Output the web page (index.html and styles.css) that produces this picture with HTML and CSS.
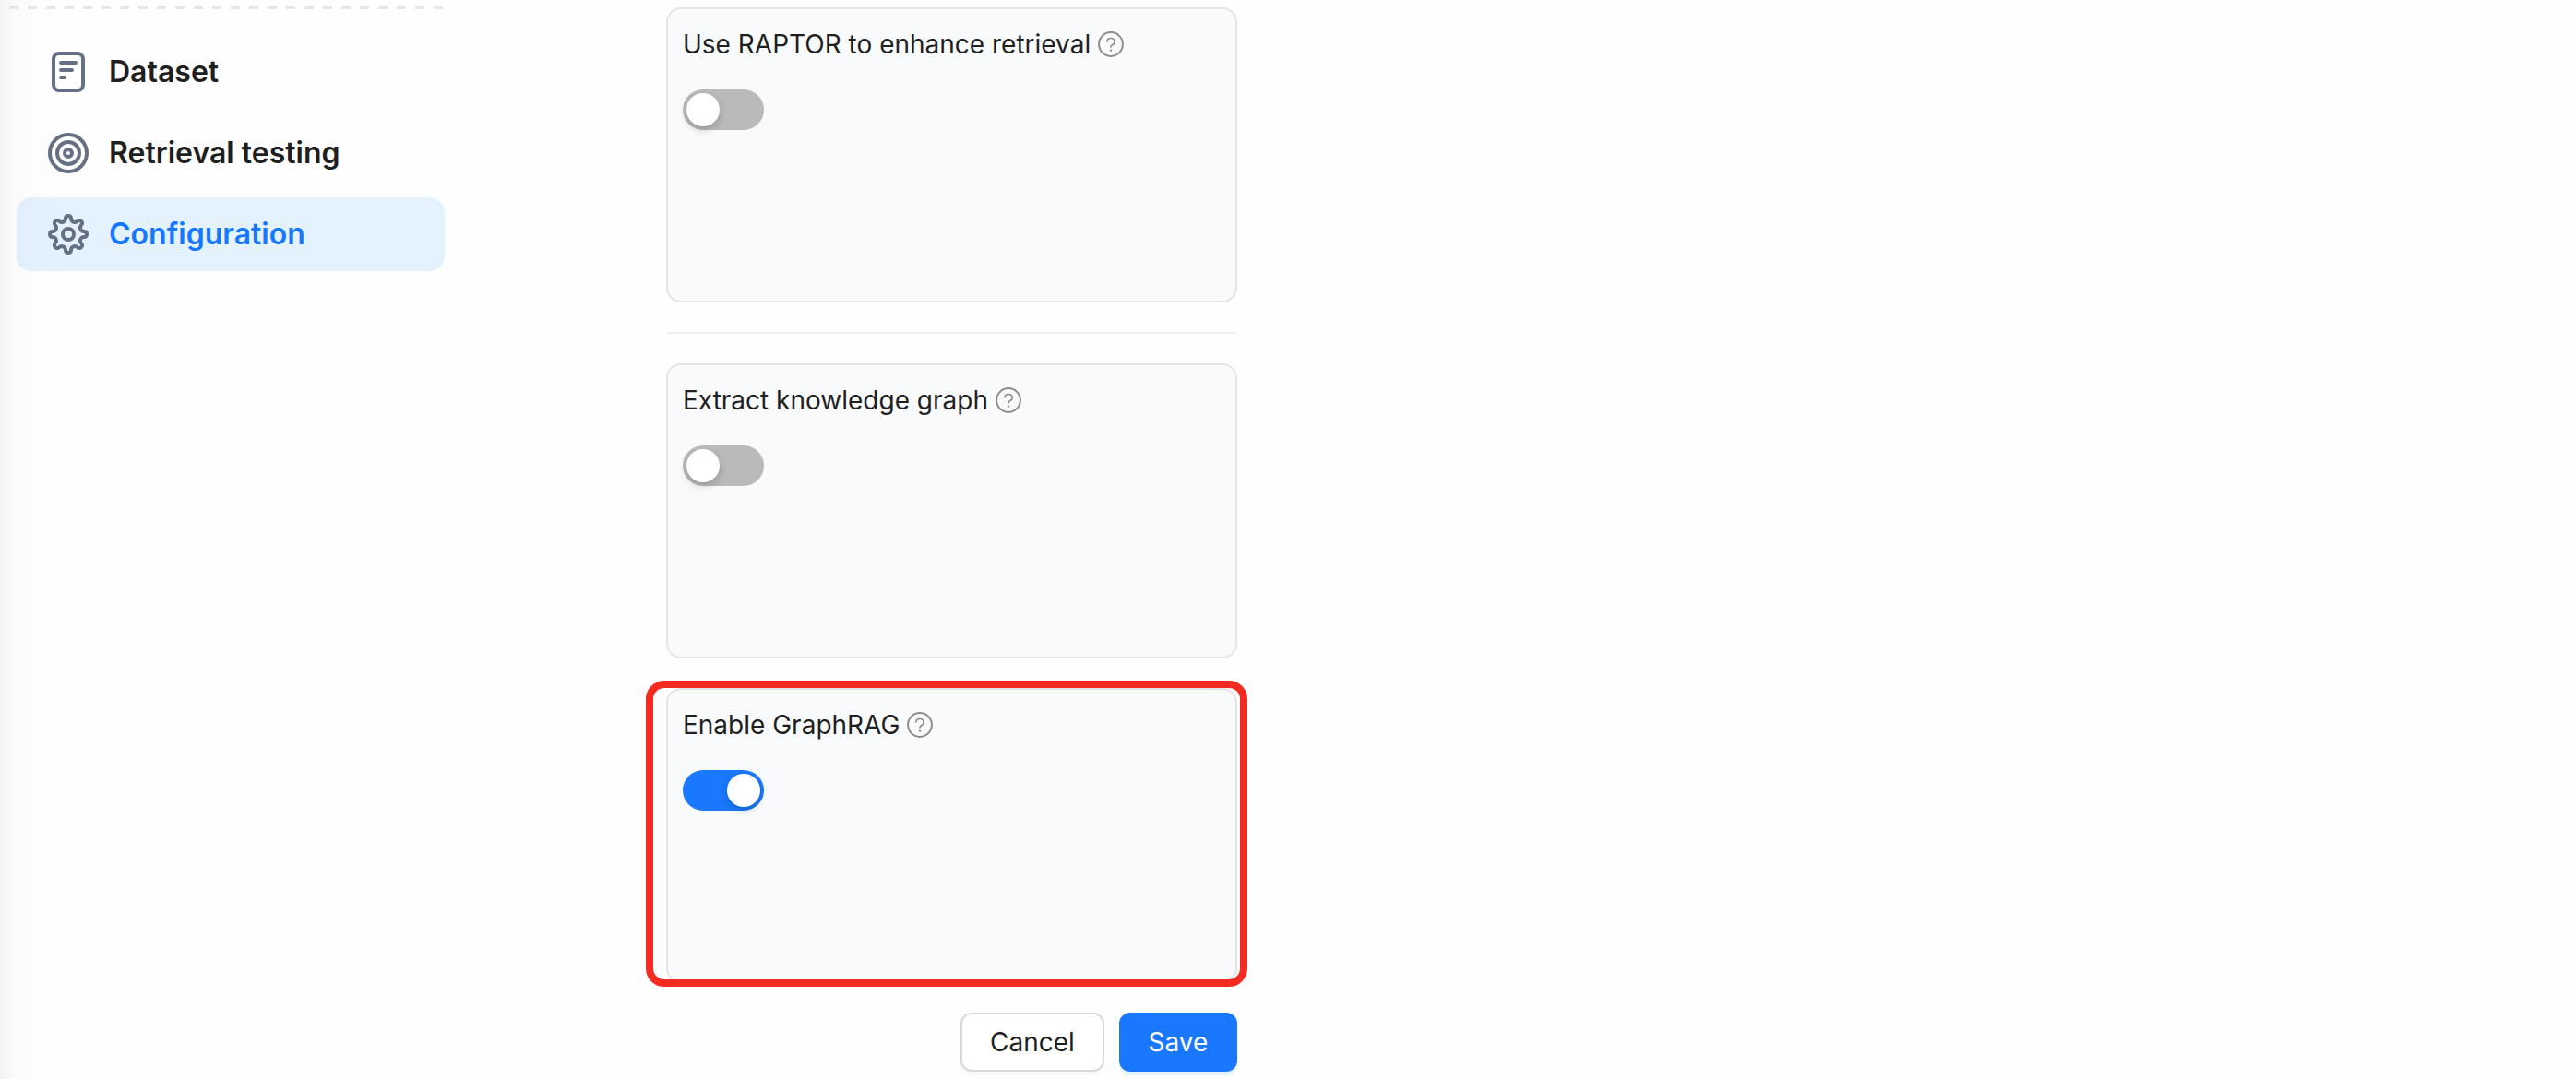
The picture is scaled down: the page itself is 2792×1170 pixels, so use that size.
FILE: index.html
```html
<!DOCTYPE html>
<html lang="en">
    <head>
        <meta charset="utf-8">
        <title>Configuration</title>
        <link rel="stylesheet" href="styles.css">
    </head>
    <body>
        <svg class="defs">
            <symbol id="help" viewBox="0 0 28 28">
                <circle cx="14" cy="14" r="12.9" stroke-width="2"/>
                <path d="M9.8 11.6C9.8 9 11.6 7.5 14 7.5s4.2 1.6 4.2 3.8c0 1.8-1.1 2.8-2.6 3.4-1.1.5-1.6 1.1-1.6 2.1v.7" stroke-width="1.7"/>
                <circle cx="14" cy="20.6" r="1.2" class="dot"/>
            </symbol>
        </svg>

        <aside class="sidebar">
            <div class="dashed"></div>
            <nav class="menu">
                <a class="item">
                    <svg class="icon" viewBox="0 0 48 48">
                        <rect x="8" y="4" width="32" height="40" rx="6"/>
                        <path d="M16 14h16M16 22h12M16 30h4"/>
                    </svg>
                    <span>Dataset</span>
                </a>
                <a class="item">
                    <svg class="icon" viewBox="0 0 48 48">
                        <circle cx="24" cy="24" r="20"/>
                        <circle cx="24" cy="24" r="12"/>
                        <circle cx="24" cy="24" r="4"/>
                    </svg>
                    <span>Retrieval testing</span>
                </a>
                <a class="item active">
                    <svg class="icon" viewBox="0 0 48 48">
                        <circle cx="24" cy="24" r="6"/>
                        <path d="M21 7C21 5 22.3 4 24 4S27 5 27 7C27 10.5 31.4 12.3 33.9 9.9C35.3 8.4 36.9 8.7 38.1 9.9C39.3 11.1 39.6 12.7 38.1 14.1C35.7 16.6 37.5 21 41 21C43 21 44 22.3 44 24S43 27 41 27C37.5 27 35.7 31.4 38.1 33.9C39.6 35.3 39.3 36.9 38.1 38.1C36.9 39.3 35.3 39.6 33.9 38.1C31.4 35.7 27 37.5 27 41C27 43 25.7 44 24 44S21 43 21 41C21 37.5 16.6 35.7 14.1 38.1C12.7 39.6 11.1 39.3 9.9 38.1C8.7 36.9 8.4 35.3 9.9 33.9C12.3 31.4 10.5 27 7 27C5 27 4 25.7 4 24S5 21 7 21C10.5 21 12.3 16.6 9.9 14.1C8.4 12.7 8.7 11.1 9.9 9.9C11.1 8.7 12.7 8.4 14.1 9.9C16.6 12.3 21 10.5 21 7z"/>
                    </svg>
                    <span>Configuration</span>
                </a>
            </nav>
        </aside>

        <main class="content">
            <section class="card">
                <div class="label">Use RAPTOR to enhance retrieval <svg class="help"><use href="#help"/></svg></div>
                <button class="switch"><span class="knob"></span></button>
            </section>
            <hr class="divider">
            <section class="card">
                <div class="label">Extract knowledge graph <svg class="help"><use href="#help"/></svg></div>
                <button class="switch"><span class="knob"></span></button>
            </section>
            <section class="card graphrag">
                <div class="label">Enable GraphRAG <svg class="help"><use href="#help"/></svg></div>
                <button class="switch on"><span class="knob"></span></button>
                <div class="highlight"></div>
            </section>
            <div class="actions">
                <button class="btn">Cancel</button>
                <button class="btn primary">Save</button>
            </div>
        </main>
    </body>
</html>
```

FILE: styles.css
```css
* {
    box-sizing: border-box;
}
body {
    margin: 0;
    height: 1170px;
    display: flex;
    overflow: hidden;
    background: linear-gradient(90deg, #f5f5f5 0, #fafafa 16px, #fdfdfd 40px, #fefefe 80px);
    font-family: Inter, "Liberation Sans", sans-serif;
    font-size: 28px;
    color: #1f1f1f;
}
.defs {
    position: absolute;
    width: 0;
    height: 0;
}

/* sidebar */
.sidebar {
    width: 500px;
    padding: 6px 18px 0 10px;
}
.dashed {
    height: 4px;
    background: repeating-linear-gradient(90deg, #e5e6e8 0 10px, transparent 10px 20px);
}
.menu {
    display: flex;
    flex-direction: column;
    gap: 8px;
    margin: 28px 0 0 8px;
}
.item {
    display: flex;
    align-items: center;
    gap: 20px;
    width: 464px;
    height: 80px;
    padding-left: 32px;
    border-radius: 16px;
    font-size: 32px;
    font-weight: 600;
}
.item span {
    padding-bottom: 2px;
}
.item.active {
    background: rgba(22, 150, 255, 0.11);
    color: #1677ff;
}
.icon {
    width: 48px;
    height: 48px;
    fill: none;
    stroke: #667085;
    stroke-width: 4;
    stroke-linecap: round;
    stroke-linejoin: round;
}

/* settings cards */
.content {
    width: 619px;
    margin: 8px 0 0 222px;
}
.card {
    height: 320px;
    padding: 6px 16px;
    border: 2px solid #e3e4e6;
    border-radius: 16px;
    background: #f9fafc;
}
.divider {
    height: 2px;
    margin: 32px 0;
    border: 0;
    background: #f0f0f0;
}
.label {
    display: flex;
    align-items: center;
    gap: 8px;
    height: 64px;
    white-space: nowrap;
}
.help {
    width: 28px;
    height: 28px;
    fill: none;
    stroke: #8c8c8d;
}
.dot {
    fill: #8c8c8d;
    stroke: none;
}
.switch {
    display: flex;
    width: 88px;
    height: 44px;
    margin-top: 17px;
    padding: 4px;
    border: 0;
    border-radius: 22px;
    background: #bababb;
}
.switch.on {
    justify-content: flex-end;
    background: #1a78ff;
}
.knob {
    width: 36px;
    height: 36px;
    border-radius: 50%;
    background: #fff;
    box-shadow: 0 4px 8px rgba(0, 35, 11, 0.2);
}
.graphrag {
    position: relative;
    margin-top: 32px;
}
.highlight {
    position: absolute;
    top: -10px;
    left: -24px;
    width: 652px;
    height: 332px;
    border: 8px solid #f52b22;
    border-radius: 20px;
}

/* buttons */
.actions {
    display: flex;
    justify-content: flex-end;
    gap: 16px;
    margin-top: 32px;
}
.btn {
    width: 156px;
    height: 64px;
    padding: 0;
    border: 2px solid #d9d9d9;
    border-radius: 12px;
    background: #fff;
    box-shadow: 0 4px 0 rgba(0, 0, 0, 0.02);
    font: inherit;
    color: inherit;
}
.btn.primary {
    width: 128px;
    border-color: #1a78ff;
    background: #1a78ff;
    box-shadow: 0 4px 0 rgba(5, 145, 255, 0.1);
    color: #fff;
}
```
